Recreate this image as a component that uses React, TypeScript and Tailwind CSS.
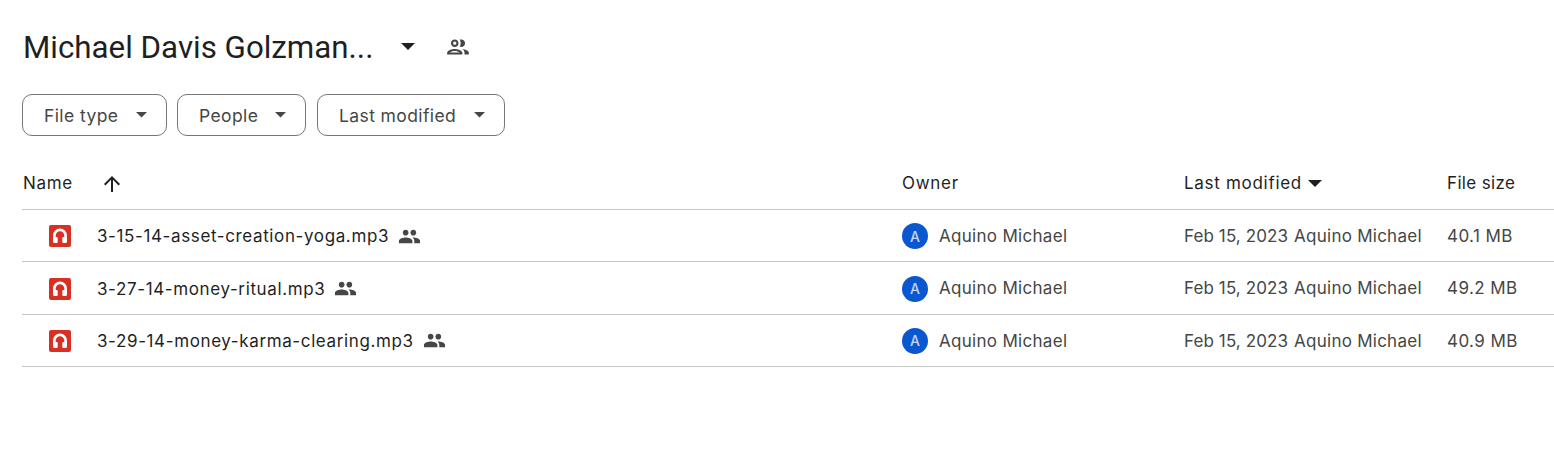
import React from 'react';

const font = { fontFamily: 'Inter, sans-serif' };

const files = [
  { name: '3-15-14-asset-creation-yoga.mp3', size: '40.1 MB' },
  { name: '3-27-14-money-ritual.mp3', size: '49.2 MB' },
  { name: '3-29-14-money-karma-clearing.mp3', size: '40.9 MB' },
];

function Caret({ className }: { className: string }) {
  return (
    <svg viewBox="0 0 10 5" className={className} fill="currentColor">
      <path d="M0 0L5 5L10 0Z" />
    </svg>
  );
}

function SharedIcon() {
  return (
    <svg viewBox="0 0 24 24" className="w-[23px] h-[23px] text-[#444746]" fill="currentColor">
      <path d="M16 11c1.66 0 2.99-1.34 2.99-3S17.66 5 16 5s-3 1.34-3 3 1.34 3 3 3zm-8 0c1.66 0 2.99-1.34 2.99-3S9.66 5 8 5 5 6.34 5 8s1.34 3 3 3zm0 2c-2.33 0-7 1.17-7 3.5V19h14v-2.5C15 14.17 10.33 13 8 13zm8 0c-.29 0-.62.02-.97.05 1.16.84 1.97 1.97 1.97 3.45V19h6v-2.5c0-2.33-4.67-3.5-7-3.5z" />
    </svg>
  );
}

function AudioIcon() {
  return (
    <svg viewBox="0 0 22 22" className="w-[22px] h-[22px]">
      <rect x="0" y="0" width="22" height="22" rx="2" fill="#d93025" />
      <path
        d="M5.4 16V10.5a5.6 5.6 0 0 1 11.2 0V16"
        fill="none"
        stroke="#fff"
        strokeWidth="2.6"
      />
      <rect x="4.1" y="12" width="4.6" height="6" rx="1" fill="#fff" />
      <rect x="13.3" y="12" width="4.6" height="6" rx="1" fill="#fff" />
    </svg>
  );
}

function Filter({ label, width }: { label: string; width: string }) {
  return (
    <button className={`${width} h-[42px] border border-[#747775] rounded-[10px] flex items-center justify-between pl-[21px] pr-[19px] text-[17.5px] tracking-[0.4px] text-[#444746]`}>
      <span className="pt-[2px]">{label}</span>
      <Caret className="w-[11px] h-[5.5px]" />
    </button>
  );
}

export default function App() {
  return (
    <div className="w-[1554px] h-[462px] bg-white overflow-hidden pl-[22px]" style={font}>
      <div className="flex items-center h-[94px] pb-[1px]">
        <h1 className="text-[31.3px] font-normal text-[#1f1f1f] w-[378px] ml-[1px] pt-[3px] whitespace-nowrap font-['Roboto',sans-serif]">Michael Davis Golzman...</h1>
        <Caret className="w-[14px] h-[7px] text-[#1f1f1f]" />
        <svg viewBox="0 0 24 24" className="w-[26px] h-[26px] ml-[30px] text-[#444746]" fill="currentColor">
          <path d="M9 13.75c-2.34 0-7 1.17-7 3.5V19h14v-1.75c0-2.33-4.66-3.5-7-3.5zM4.34 17c.84-.58 2.87-1.25 4.66-1.25s3.82.67 4.66 1.25H4.34zM9 12c1.93 0 3.5-1.57 3.5-3.5S10.93 5 9 5 5.5 6.57 5.5 8.5 7.07 12 9 12zm0-5c.83 0 1.5.67 1.5 1.5S9.83 10 9 10s-1.5-.67-1.5-1.5S8.17 7 9 7zm7.04 6.81c1.16.84 1.96 1.96 1.96 3.44V19h4v-1.75c0-2.02-3.5-3.17-5.96-3.44zM15 12c1.93 0 3.5-1.57 3.5-3.5S16.93 5 15 5c-.54 0-1.04.13-1.5.35.63.89 1 1.98 1 3.15s-.37 2.26-1 3.15c.46.22.96.35 1.5.35z" />
        </svg>
      </div>

      <div className="flex gap-[10px]">
        <Filter label="File type" width="w-[145px]" />
        <Filter label="People" width="w-[129px]" />
        <Filter label="Last modified" width="w-[188px] ml-[1px]" />
      </div>

      <div className="mt-[21px] flex items-center h-[53px] border-b border-[#c7c7c7] text-[17px] tracking-[0.7px] text-[#1f1f1f] pt-[1px]">
        <div className="w-[880px] flex items-center pl-[1px]">
          <span className="w-[77px]">Name</span>
          <svg viewBox="0 0 24 24" className="w-[24px] h-[24px] text-[#1f1f1f]" fill="currentColor">
            <path d="M4 12l1.41 1.41L11 7.83V20h2V7.83l5.58 5.59L20 12l-8-8-8 8z" />
          </svg>
        </div>
        <div className="w-[282px]">Owner</div>
        <div className="w-[263px] flex items-center gap-[6px]">
          <span>Last modified</span>
          <Caret className="w-[14px] h-[7px]" />
        </div>
        <div className="tracking-[0.35px]">File size</div>
      </div>

      {files.map((f) => (
        <div key={f.name} className="flex items-center h-[52.4px] border-b border-[#c7c7c7] text-[17px] pt-[1px]">
          <div className="w-[880px] flex items-center pl-[27px]">
            <AudioIcon />
            <span className="ml-[26px] pt-[2px] text-[#1f1f1f] tracking-[0.62px]">{f.name}</span>
            <span className="ml-[9px] flex"><SharedIcon /></span>
          </div>
          <div className="w-[282px] flex items-center text-[#444746]">
            <span className="w-[26px] h-[26px] rounded-full bg-[#0b57d0] text-[#c2d7f7] text-[14px] font-medium flex items-center justify-center">A</span>
            <span className="ml-[11px] pt-[1px] tracking-[0.3px]">Aquino Michael</span>
          </div>
          <div className="w-[263px] flex items-center pt-[1px] text-[#444746]">
            <span className="tracking-[0.1px]">Feb 15, 2023</span>
            <span className="ml-[6px] tracking-[0.25px]">Aquino Michael</span>
          </div>
          <div className="text-[#444746] pt-[1px] tracking-[0.4px]">{f.size}</div>
        </div>
      ))}
    </div>
  );
}
